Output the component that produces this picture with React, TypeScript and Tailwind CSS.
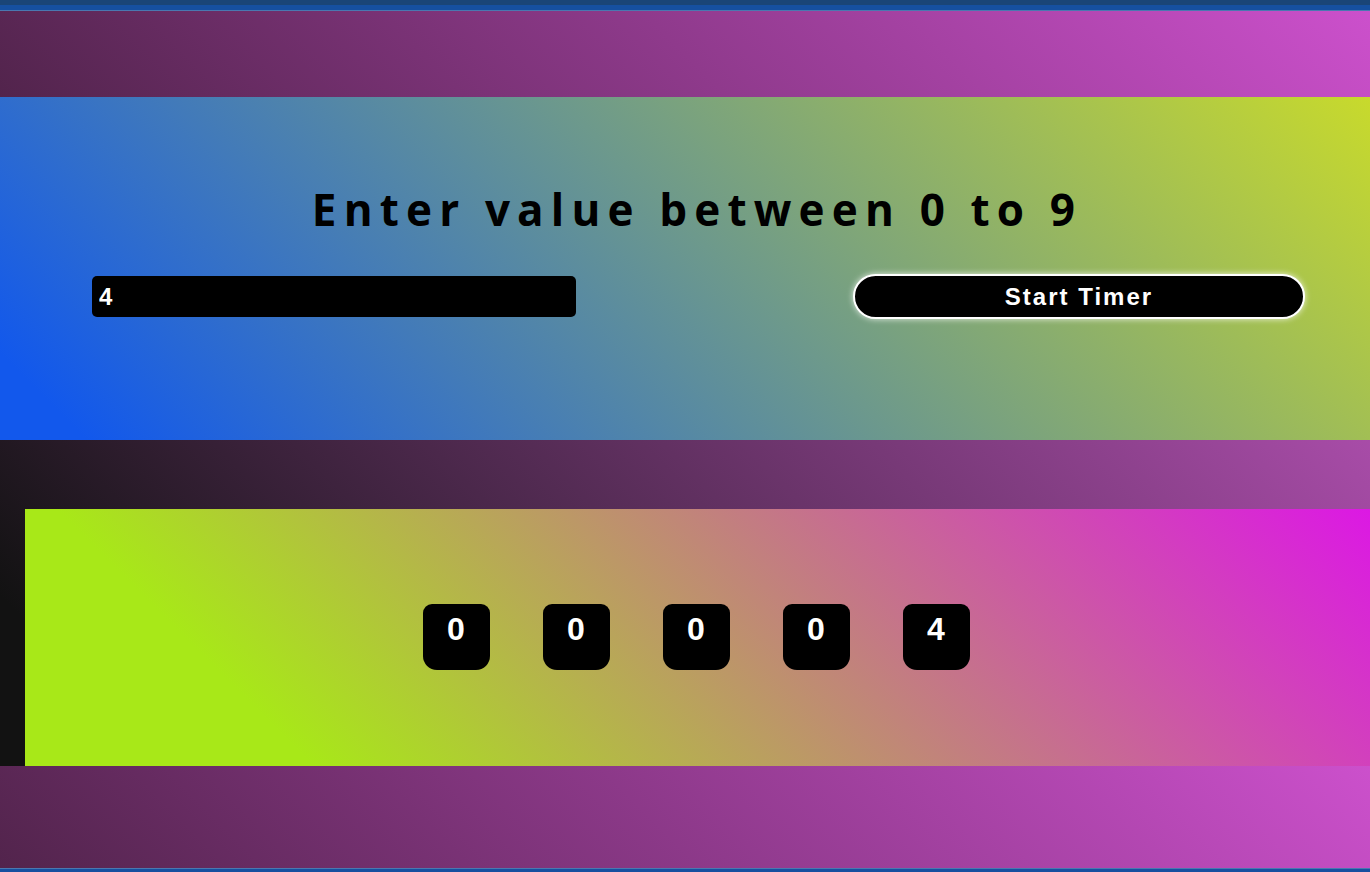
import { useState } from "react";

const digitsOf = (n: number) => String(n).padStart(5, "0").split("");

export default function App() {
  const [value, setValue] = useState("4");
  const digits = digitsOf(Number(value) || 0);

  return (
    <div className="w-[1370px] h-[872px] flex flex-col overflow-hidden font-['Liberation_Sans',Arial,sans-serif]">
      {/* window strip */}
      <div className="h-[5px] bg-[#1a4577]" />
      <div className="h-[5px] bg-[#1650a0]" />
      <div className="h-px bg-[#4a78b0]" />

      <div className="h-[86px] bg-linear-45/srgb from-[#52244c] to-[#cc50cc]" />

      <section className="h-[343px] flex flex-col bg-linear-45/srgb from-[#1258ec] from-5% to-[#c8da2c] pt-[90px]">
        <h1 className="text-center text-[44px] leading-none font-bold tracking-[0.163em] text-black font-['Open_Sans','Noto_Sans',sans-serif] pl-[24px]">
          Enter value between 0 to 9
        </h1>
        <div className="flex items-center mt-[43px] pl-[92px] pr-[65px]">
          <input
            value={value}
            onChange={(e) => setValue(e.target.value)}
            className="w-[484px] h-[41px] rounded-[5px] bg-black text-white text-[24px] font-bold px-[7px] outline-none"
          />
          <button className="ml-auto w-[452px] h-[45px] rounded-full bg-black border-2 border-white text-white text-[24px] font-bold tracking-[2px] shadow-[0_0_6px_rgba(255,255,255,0.8)]">
            Start Timer
          </button>
        </div>
      </section>

      <section className="h-[326px] flex flex-col bg-linear-45/srgb from-[#121212] from-10% to-[#a84ca8] pt-[69px] pl-[25px]">
        <div className="h-[257px] flex justify-center gap-[53px] pt-[95px] pr-[3px] bg-linear-45/srgb from-[#a8e818] from-18% to-[#dc18e4]">
          {digits.map((d, i) => (
            <div
              key={i}
              className="w-[67px] h-[66px] bg-black rounded-t-[9px] rounded-b-[14px] flex justify-center pt-[9px] text-white text-[32px] font-bold leading-none"
            >
              {d}
            </div>
          ))}
        </div>
      </section>

      <div className="h-[102px] bg-linear-45/srgb from-[#52244c] to-[#cc50cc]" />
      <div className="h-px bg-[#4a78b0]" />
      <div className="flex-1 bg-[#1650a0]" />
    </div>
  );
}
